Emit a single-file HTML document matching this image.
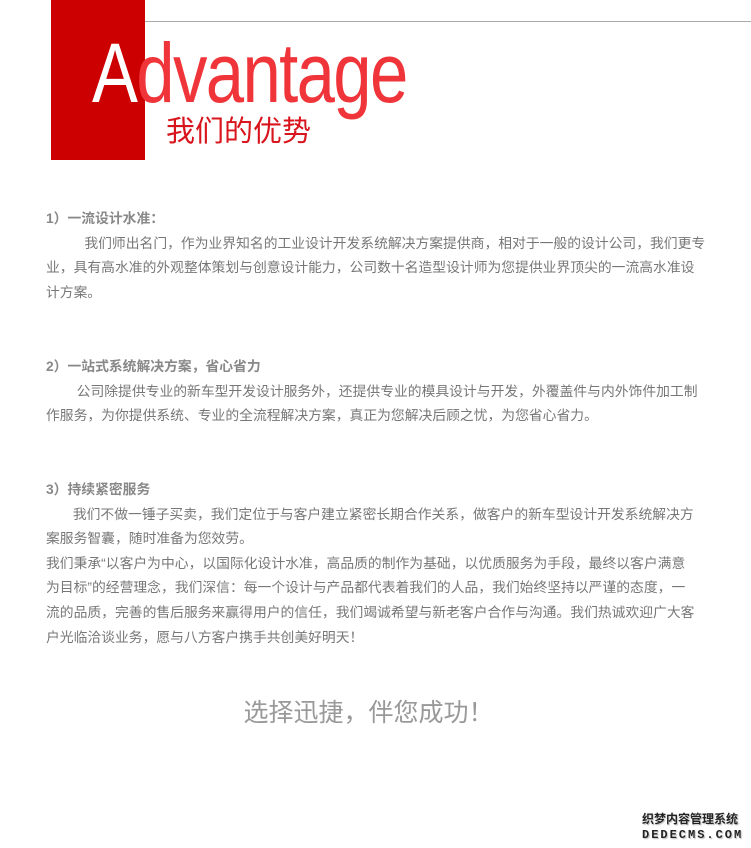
<!DOCTYPE html>
<html><head><meta charset="utf-8"><style>
body{margin:0;width:751px;height:848px;background:#fff;position:relative;overflow:hidden;font-family:"Liberation Sans","Noto Sans CJK SC",sans-serif;}
.blk{position:absolute;left:51px;top:0;width:94px;height:160px;background:#cc0000;}
.line{position:absolute;left:145px;top:21px;width:606px;height:1px;background:#aaa;}
.adv{position:absolute;left:92px;top:28px;font-size:84px;line-height:90px;color:#f0353a;letter-spacing:-2px;transform:scaleX(0.82);transform-origin:0 0;}
.adv span{color:#fff;}
.cn{position:absolute;left:166px;top:114px;font-size:29px;line-height:36px;color:#d8141c;}
.t{position:absolute;left:46px;font-size:13.8px;line-height:24.6px;color:#777;white-space:nowrap;}
.h{font-weight:bold;color:#888;}
.s{position:absolute;left:0;width:737px;text-align:center;top:693px;font-size:25px;color:#999;}
.wm{position:absolute;left:642px;top:812px;font-size:12px;line-height:15px;font-weight:bold;color:#222;text-shadow:0 0 2px #fff,1px 1px 1px #aaa;}
</style></head><body>
<div class="blk"></div><div class="line"></div>
<div class="adv"><span>A</span>dvantage</div>
<div class="cn">我们的优势</div>
<div class="t" style="top:207px"><span class="h">1）一流设计水准：</span><br>&nbsp;&nbsp;&nbsp;&nbsp;&nbsp;&nbsp;&nbsp;&nbsp;&nbsp;&nbsp;我们师出名门，作为业界知名的工业设计开发系统解决方案提供商，相对于一般的设计公司，我们更专<br>业，具有高水准的外观整体策划与创意设计能力，公司数十名造型设计师为您提供业界顶尖的一流高水准设<br>计方案。</div>
<div class="t" style="top:355px"><span class="h">2）一站式系统解决方案，省心省力</span><br>&nbsp;&nbsp;&nbsp;&nbsp;&nbsp;&nbsp;&nbsp;&nbsp;公司除提供专业的新车型开发设计服务外，还提供专业的模具设计与开发，外覆盖件与内外饰件加工制<br>作服务，为你提供系统、专业的全流程解决方案，真正为您解决后顾之忧，为您省心省力。</div>
<div class="t" style="top:478px"><span class="h">3）持续紧密服务</span><br>&nbsp;&nbsp;&nbsp;&nbsp;&nbsp;&nbsp;&nbsp;我们不做一锤子买卖，我们定位于与客户建立紧密长期合作关系，做客户的新车型设计开发系统解决方<br>案服务智囊，随时准备为您效劳。<br>我们秉承“以客户为中心，以国际化设计水准，高品质的制作为基础，以优质服务为手段，最终以客户满意<br>为目标”的经营理念，我们深信：每一个设计与产品都代表着我们的人品，我们始终坚持以严谨的态度，一<br>流的品质，完善的售后服务来赢得用户的信任，我们竭诚希望与新老客户合作与沟通。我们热诚欢迎广大客<br>户光临洽谈业务，愿与八方客户携手共创美好明天！</div>
<div class="s">选择迅捷，伴您成功！</div>
<div class="wm">织梦内容管理系统<br><span style="letter-spacing:2px;font-family:'Liberation Mono',monospace">DEDECMS.COM</span></div>
</body></html>
